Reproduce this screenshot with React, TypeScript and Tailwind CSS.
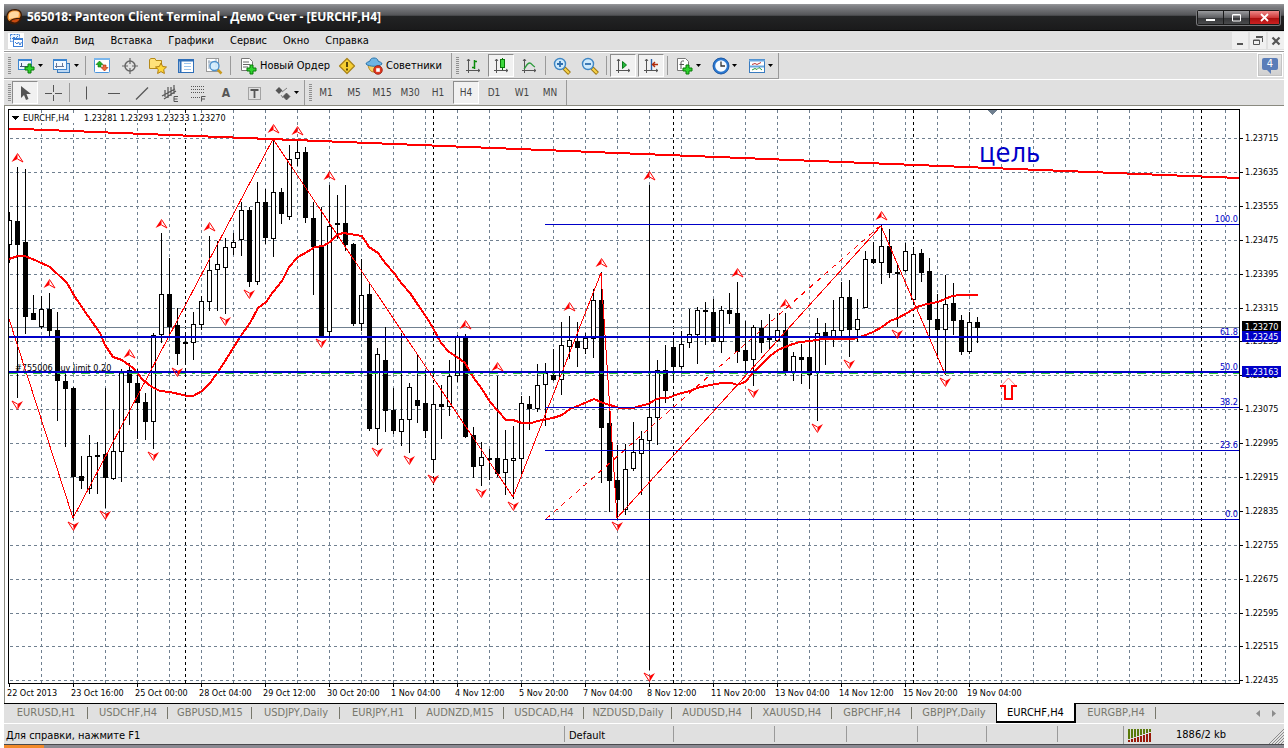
import React from "react";

type Candle = [x: number, high: number, low: number, top: number, bottom: number, filled: 0 | 1];

const CANDLES: Candle[] = [
  [9, 212, 263, 220, 245, 0], [17, 167, 398, 221, 245, 1], [25, 169, 334, 242, 317, 1], [33, 295, 319, 313, 320, 1],
  [41, 296, 329, 309, 327, 0], [49, 293, 338, 309, 331, 1], [57, 312, 421, 330, 381, 1], [65, 373, 447, 381, 389, 1],
  [73, 387, 519, 388, 477, 1], [81, 456, 489, 476, 481, 1], [89, 435, 494, 456, 489, 0], [97, 442, 494, 455, 457, 1],
  [105, 388, 508, 454, 478, 1], [113, 410, 480, 451, 479, 0], [121, 369, 482, 371, 452, 0], [129, 363, 425, 370, 383, 1],
  [137, 369, 439, 383, 403, 1], [145, 393, 440, 402, 422, 1], [153, 333, 449, 335, 422, 0], [161, 233, 343, 294, 335, 0],
  [169, 258, 338, 294, 327, 1], [177, 308, 365, 325, 354, 1], [185, 335, 363, 342, 344, 1], [193, 312, 360, 324, 343, 0],
  [201, 296, 330, 301, 325, 0], [209, 236, 311, 270, 302, 0], [217, 241, 311, 264, 270, 0], [225, 238, 314, 247, 268, 0],
  [233, 233, 255, 242, 248, 0], [241, 202, 256, 210, 240, 0], [249, 207, 287, 210, 282, 1], [257, 182, 285, 202, 282, 0],
  [265, 189, 244, 202, 238, 1], [273, 139, 257, 192, 239, 0], [281, 188, 224, 192, 214, 1], [289, 145, 220, 159, 217, 0],
  [297, 139, 166, 152, 159, 0], [305, 147, 223, 152, 218, 1], [313, 202, 295, 218, 247, 1], [321, 207, 336, 246, 336, 1],
  [329, 185, 336, 226, 332, 0], [337, 195, 239, 223, 225, 1], [345, 185, 251, 223, 245, 1], [353, 243, 326, 244, 324, 1],
  [361, 259, 331, 295, 324, 0], [369, 282, 431, 294, 429, 1], [377, 348, 445, 354, 429, 0], [385, 327, 432, 360, 411, 1],
  [393, 388, 434, 410, 431, 1], [401, 333, 446, 419, 432, 0], [409, 383, 453, 387, 420, 0], [417, 354, 423, 400, 406, 1],
  [425, 370, 438, 403, 431, 1], [433, 385, 472, 404, 460, 0], [441, 385, 439, 404, 407, 1], [449, 360, 416, 376, 407, 0],
  [457, 335, 382, 337, 376, 0], [465, 334, 438, 337, 437, 1], [473, 427, 478, 435, 467, 1], [481, 442, 486, 457, 466, 0],
  [489, 449, 480, 458, 460, 1], [497, 376, 477, 458, 474, 1], [505, 430, 495, 459, 473, 0], [513, 426, 499, 458, 461, 0],
  [521, 396, 476, 403, 459, 0], [529, 396, 430, 404, 409, 1], [537, 364, 412, 385, 409, 0], [545, 363, 426, 373, 385, 0],
  [553, 349, 381, 375, 380, 1], [561, 322, 395, 345, 380, 0], [569, 316, 359, 340, 347, 0], [577, 322, 367, 341, 348, 1],
  [585, 333, 354, 338, 349, 0], [593, 289, 358, 300, 339, 0], [601, 272, 483, 300, 428, 1], [609, 399, 512, 423, 481, 1],
  [617, 445, 519, 480, 500, 1], [625, 444, 515, 469, 510, 0], [633, 422, 471, 452, 469, 0], [641, 431, 495, 439, 454, 0],
  [649, 185, 670, 417, 441, 0], [657, 360, 445, 370, 418, 0], [665, 345, 403, 370, 391, 1], [673, 340, 383, 347, 367, 1],
  [681, 331, 369, 344, 367, 0], [689, 309, 348, 334, 343, 0], [697, 307, 364, 310, 335, 0], [705, 302, 345, 310, 312, 1],
  [713, 299, 342, 312, 342, 1], [721, 306, 353, 310, 342, 0], [729, 293, 324, 310, 314, 1], [737, 282, 363, 313, 352, 1],
  [745, 321, 373, 350, 361, 1], [753, 325, 386, 327, 360, 0], [761, 320, 353, 328, 343, 1], [769, 314, 350, 337, 340, 1],
  [777, 313, 342, 330, 341, 0], [785, 313, 375, 330, 372, 1], [793, 352, 381, 356, 372, 0], [801, 344, 384, 357, 360, 1],
  [809, 337, 389, 357, 375, 1], [817, 318, 421, 333, 373, 0], [825, 323, 365, 332, 340, 1], [833, 300, 347, 330, 340, 0],
  [841, 282, 339, 297, 331, 0], [849, 280, 357, 297, 330, 1], [857, 299, 342, 319, 330, 0], [865, 251, 308, 259, 308, 0],
  [873, 242, 264, 259, 263, 1], [881, 225, 284, 246, 263, 0], [889, 229, 278, 246, 273, 1], [897, 265, 327, 272, 274, 1],
  [905, 243, 272, 251, 271, 0], [913, 247, 303, 254, 300, 0], [921, 249, 282, 253, 273, 1], [929, 258, 336, 271, 320, 1],
  [937, 294, 359, 319, 330, 1], [945, 275, 375, 304, 330, 0], [953, 283, 335, 303, 321, 1], [961, 315, 355, 320, 352, 1],
  [969, 312, 354, 322, 352, 0], [977, 317, 343, 322, 328, 1],
];

const FRACTALS_UP = [
  [17, 153], [49, 279], [129, 349], [161, 219], [209, 222], [273, 124], [297, 126], [329, 171],
  [465, 320], [497, 362], [569, 302], [601, 258], [649, 171], [737, 268], [785, 299], [881, 211],
];
const FRACTALS_DOWN = [
  [17, 401], [225, 317], [249, 290], [321, 339], [177, 368], [153, 452], [105, 511], [73, 522], [377, 448], [409, 456],
  [433, 475], [481, 489], [513, 502], [617, 522], [649, 673], [753, 389], [817, 424], [849, 360], [897, 330], [945, 378],
];

const AVERAGE =
  "9,259 18,256 25,256 37,261 50,267 67,283 75,297 88,316 100,333 105,345 113,357 122,360 133,368 143,380 152,387 160,391 170,392 187,396 193,396 202,391 210,383 218,372 227,358 240,337 250,323 258,308 266,302 273,292 282,281 289,267 298,257 307,252 315,247 323,246 330,242 337,235 343,233 350,234 362,236 369,247 378,253 386,264 394,273 402,284 410,293 418,305 427,318 433,328 441,343 449,352 457,357 465,363 473,377 482,389 490,402 498,411 506,420 513,420 522,423 532,423 537,421 553,418 562,415 570,409 580,405 594,399 603,403 620,408 633,408 648,404 655,400 660,398 668,398 678,394 690,391 697,388 710,385 722,383 732,383 737,385 745,382 753,373 762,364 770,356 778,350 790,345 800,342 810,341 822,339 853,339 863,336 873,332 882,327 890,321 898,318 907,313 917,307 927,304 938,302 952,296 960,295 978,295";

const PRICES: [string, number][] = [
  ["1.23715", 138], ["1.23635", 172], ["1.23555", 206], ["1.23475", 240], ["1.23395", 274], ["1.23315", 308],
  ["1.23235", 341], ["1.23155", 375], ["1.23075", 409], ["1.22995", 443], ["1.22915", 477], ["1.22835", 511],
  ["1.22755", 545], ["1.22675", 579], ["1.22595", 613], ["1.22515", 646], ["1.22435", 680],
];
const PRICE_TAGS: [string, number, string][] = [
  ["1.23270", 321, "#000"], ["1.23245", 331, "#0000c8"], ["1.23163", 366, "#0000c8"],
];
const TIMES = [
  "22 Oct 2013", "23 Oct 16:00", "25 Oct 00:00", "28 Oct 04:00", "29 Oct 12:00", "30 Oct 20:00", "1 Nov 04:00",
  "4 Nov 12:00", "5 Nov 20:00", "7 Nov 04:00", "8 Nov 12:00", "11 Nov 20:00", "13 Nov 04:00", "14 Nov 12:00",
  "15 Nov 20:00", "19 Nov 04:00",
];
const FIBS: [string, number][] = [
  ["100.0", 224], ["61.8", 337], ["50.0", 372], ["38.2", 407], ["23.6", 450], ["0.0", 519],
];
const WEEK_LINES = [185, 433, 673, 913, 1201];

function Chart() {
  return (
    <svg
      role="img"
      aria-label="EURCHF H4 candlestick chart"
      viewBox="5 106 1279 597"
      preserveAspectRatio="xMinYMin meet"
      className="block h-full w-full font-['DejaVu_Sans_Condensed','DejaVu_Sans',sans-serif] text-[9px]"
      shapeRendering="crispEdges"
    >
      <clipPath id="plot"><rect x="9" y="110" width="1230" height="573" /></clipPath>
      <g clipPath="url(#plot)">
        <g stroke="#708090" strokeDasharray="3 3">
          {Array.from({ length: 38 }, (_, i) => (
            <line key={i} x1={41.5 + i * 32} x2={41.5 + i * 32} y1="110" y2="683" />
          ))}
          {PRICES.map(([p, y]) => <line key={p} x1="10" x2="1239" y1={y + 0.5} y2={y + 0.5} />)}
        </g>
        <g stroke="#000" strokeDasharray="3 3">
          {WEEK_LINES.map((x) => <line key={x} x1={x + 0.5} x2={x + 0.5} y1="110" y2="683" />)}
        </g>
        <line x1="9" x2="1239" y1="327.5" y2="327.5" stroke="#708090" />
        <text x="15" y="371">#755006 buy limit 0.20</text>
        {CANDLES.map(([x, high, low, top, bottom, filled]) => (
          <g key={x}>
            <rect x={x} y={high} width="1" height={low - high} fill="#000" />
            <rect x={x - 2} y={top} width="5" height={bottom - top} fill="#000" />
            {!filled && <rect x={x - 1} y={top + 1} width="3" height={bottom - top - 2} fill="#fff" />}
          </g>
        ))}
        <polyline points={AVERAGE} fill="none" stroke="#f00" strokeWidth="2" />
        <line x1="9" y1="128.5" x2="1239" y2="178" stroke="#f00" strokeWidth="2" />
        <polyline
          points="9,319 73,518 273,139 513,497 601,273 617,518 881,226 945,374"
          fill="none" stroke="#f00"
        />
        <line x1="546" y1="519" x2="881" y2="225" stroke="#f00" strokeDasharray="5 5" />
        <line x1="9" x2="1239" y1="373.5" y2="373.5" stroke="#32cd32" strokeDasharray="9 6 3 6" />
        <g stroke="#0000c8">
          {[224, 407, 450, 519].map((y) => <line key={y} x1="545" x2="1239" y1={y + 0.5} y2={y + 0.5} />)}
          <line x1="9" x2="1239" y1="337" y2="337" strokeWidth="2" />
          <line x1="9" x2="1239" y1="372" y2="372" strokeWidth="2" />
        </g>
        <g fill="#0000c8" textAnchor="end">
          {FIBS.map(([label, y]) => <text key={label} x="1238" y={y - 2}>{label}</text>)}
        </g>
        <g fill="#f00" stroke="#f00" strokeWidth="1" shapeRendering="auto">
          {FRACTALS_UP.map(([x, y]) => (
            <g key={`${x}-${y}`}>
              <path d={`M${x + 0.5} ${y}L${x - 5.5} ${y + 9}L${x + 0.5} ${y + 6}Z`} strokeWidth="0" />
              <path d={`M${x + 0.5} ${y + 0.5}L${x + 6} ${y + 9}L${x + 0.5} ${y + 6}`} fill="none" />
            </g>
          ))}
          {FRACTALS_DOWN.map(([x, y]) => (
            <g key={`${x}-${y}`}>
              <path d={`M${x + 0.5} ${y + 9}L${x + 6} ${y}L${x + 0.5} ${y + 3}Z`} strokeWidth="0" />
              <path d={`M${x + 0.5} ${y + 8.5}L${x - 5} ${y}L${x + 0.5} ${y + 3}`} fill="none" />
            </g>
          ))}
        </g>
        <path d="M987 110h10l-5 5z" fill="#708090" />
        <path d="M1001 386l7.5-8 7.5 8" fill="none" stroke="#f88" shapeRendering="auto" />
        <path d="M1000 386h5v13h7v-13h5" fill="none" stroke="#f00" strokeWidth="2" />
        <text x="979" y="162" fill="#0000c8" className="text-[27px]">цель</text>
      </g>
      <path d="M8.500 683.500V109.500H1239.500V683.500Z" fill="none" stroke="#000" />
      <path d="M12 116h7l-3.500 4z" fill="#000" />
      <rect x="21" y="113" width="206" height="10" fill="#fff" />
      <text x="23" y="121">EURCHF,H4</text>
      <text x="84" y="121">1.23281 1.23293 1.23233 1.23270</text>
      {PRICES.map(([p, y]) => (
        <g key={p}>
          <rect x="1240" y={y} width="3" height="1" />
          <text x="1245" y={y + 3}>{p}</text>
        </g>
      ))}
      {PRICE_TAGS.map(([p, y, color]) => (
        <g key={p}>
          <rect x="1242" y={y} width="39" height="11" fill={color} />
          <text x="1245" y={y + 9} fill="#fff">{p}</text>
        </g>
      ))}
      {TIMES.map((t, i) => (
        <g key={t}>
          <rect x={9 + i * 64} y="684" width="1" height="3" />
          <text x={7 + i * 64} y="696">{t}</text>
        </g>
      ))}
    </svg>
  );
}

function Icon({ children, w = 18 }: { children: React.ReactNode; w?: number }) {
  return <svg width={w} height="18" viewBox={`0 0 ${w} 18`} aria-hidden="true" className="shrink-0">{children}</svg>;
}
function Caret() {
  return <svg width="5" height="3" viewBox="0 0 5 3" aria-hidden="true" className="shrink-0"><path d="M0 0h5L2.500 3z" /></svg>;
}
const Grip = () => <span className="my-1 ml-1 w-[3px] shrink-0 bg-[repeating-linear-gradient(#8f8f8f_0_1px,#e0e0e0_1px_2px)]" />;
const Sep = () => <span className="mx-0.5 my-0.5 w-px shrink-0 bg-[#9a9a9a]" />;

const PRESSED =
  "border border-t-[#8c8c8c] border-l-[#8c8c8c] border-r-white border-b-white bg-[#f1f1f1]";

function Tool({ label, pressed, wide, children }: { label: string; pressed?: boolean; wide?: boolean; children: React.ReactNode }) {
  return (
    <button
      type="button"
      aria-label={label}
      className={`flex shrink-0 items-center justify-center gap-0.5 ${wide ? "w-9" : "mx-px w-[26px]"} ${pressed ? PRESSED : ""}`}
    >
      {children}
    </button>
  );
}

const Axes = () => <path d="M4.500 2v14M2 13.500h14M3 4l1.500-2L6 4M14 12l2 1.500-2 1.500" fill="none" stroke="#555" />;
const Plus = ({ x, y }: { x: number; y: number }) => (
  <path d={`M${x + 3} ${y}h3v3h3v3h-3v3h-3v-3h-3v-3h3z`} fill="#2fd32f" stroke="#087a08" />
);

function Magnifier({ minus }: { minus?: boolean }) {
  return (
    <Icon>
      <path d="M11 11l5.500 5.500" stroke="#9a7410" strokeWidth="4" />
      <path d="M11.500 11.500l4.500 4.500" stroke="#f6d24a" strokeWidth="2.200" />
      <circle cx="7" cy="7" r="5.500" fill="#cfeafb" stroke="#3f86c4" strokeWidth="1.400" />
      <path d={minus ? "M4 7h6" : "M4 7h6M7 4v6"} stroke="#2f6fae" strokeWidth="1.800" />
    </Icon>
  );
}

const TABS: [string, string][] = [
  ["EURUSD,H1", "w-21"], ["USDCHF,H4", "w-20"], ["GBPUSD,M15", "w-21"], ["USDJPY,Daily", "w-22"], ["EURJPY,H1", "w-19"],
  ["AUDNZD,M15", "w-22"], ["USDCAD,H4", "w-20"], ["NZDUSD,Daily", "w-22"], ["AUDUSD,H4", "w-20"], ["XAUUSD,H4", "w-20"],
  ["GBPCHF,H4", "w-20"], ["GBPJPY,Daily", "w-21"], ["EURCHF,H4", "w-20"], ["EURGBP,H4", "w-20"],
];
const PERIODS = ["M1", "M5", "M15", "M30", "H1", "H4", "D1", "W1", "MN"];
const MENU = ["Файл", "Вид", "Вставка", "Графики", "Сервис", "Окно", "Справка"];
const STATUS_CELLS = ["w-[101px]", "w-[72px]", "w-[71px]", "w-[69px]", "w-[71px]", "w-[66px]"];

export default function App() {
  return (
    <div className="flex h-screen flex-col overflow-hidden bg-white px-1 pt-1 font-['DejaVu_Sans_Condensed','DejaVu_Sans',sans-serif] text-[11px] text-black">
      <header className="flex h-[27px] shrink-0 items-center border-b border-black bg-[linear-gradient(#98999c_0%,#818286_8%,#525356_44%,#232425_45%,#1a1a1b_100%)] pr-1 pl-0.5">
        <Icon>
          <path d="M.5 8C.5 4 4 1 8.500 1S16 3 16 7.500 13 16.500 8.500 16.500.5 13 .5 8z" fill="#3c1c08" />
          <path d="M1.500 9C2 4 5 2 9 2.500c4 0 6 2 5.500 5.500l-1 2c-4 0-8 .5-10 3-1.500-1-2-2.500-2-4z" fill="#f59a3c" />
          <path d="M3 6c2-3 7-3.500 10-1.500L12.500 9 3 11z" fill="#ffd7a0" />
          <path d="M5 13c3-2 6-2 8.500-2-1 3-4 4-7 3z" fill="#c84a10" />
        </Icon>
        <h1 className="ml-[3px] font-['Open_Sans',sans-serif] text-[12px] leading-4 font-bold whitespace-nowrap text-white">
          565018: Panteon Client Terminal - Демо Счет - [EURCHF,H4]
        </h1>
        <div className="ml-auto flex h-[15px] gap-px rounded-xs bg-[#1a1a1a] p-px ring-1 ring-[#77787b]">
          <button type="button" aria-label="Свернуть" className="flex w-[25px] items-center justify-center bg-[linear-gradient(#9a9b9e,#5d5e61_50%,#343537_51%,#4a4b4d)]">
            <svg width="9" height="9" viewBox="0 0 9 9"><path d="M0 6h9v2H0z" fill="#fff" /></svg>
          </button>
          <button type="button" aria-label="Развернуть" className="flex w-[25px] items-center justify-center bg-[linear-gradient(#9a9b9e,#5d5e61_50%,#343537_51%,#4a4b4d)]">
            <svg width="9" height="9" viewBox="0 0 9 9"><path d="M.5 2h8v6h-8zM.5 1.500h8" fill="none" stroke="#fff" /></svg>
          </button>
          <button type="button" aria-label="Закрыть" className="flex w-[29px] items-center justify-center bg-[linear-gradient(#e88,#cf3a3a_50%,#a80d0d_51%,#c22)]">
            <svg width="9" height="9" viewBox="0 0 9 9"><path d="M1 1l7 7M8 1L1 8" stroke="#fff" strokeWidth="1.800" /></svg>
          </button>
        </div>
      </header>

      <nav className="flex h-[19px] shrink-0 items-center bg-[#e0e0e0] pl-1" aria-label="Меню">
        <span className="flex h-4 w-4 items-center justify-center bg-white">
          <svg width="15" height="15" viewBox="0 0 15 15" aria-hidden="true">
            <rect x="1.500" y="1.500" width="9" height="7" fill="#eaf3ff" stroke="#3d7fd6" strokeDasharray="2 1" />
            <path d="M3 6l2-2 1.500 1.500L9 3" fill="none" stroke="#3d7fd6" />
            <rect x="4.500" y="5.500" width="9" height="8" fill="#fff" stroke="#3d7fd6" />
            <path d="M4 6.500h10" stroke="#3d7fd6" />
            <path d="M6 9l2 2 1.500-2 1.500 3 1.500-3" fill="none" stroke="#3d7fd6" />
          </svg>
        </span>
        <div className="ml-[7px] flex gap-4">
          {MENU.map((m) => <button key={m} type="button" className="leading-4">{m}</button>)}
        </div>
        <div className="ml-auto flex h-full items-center gap-0.5">
          <button type="button" aria-label="Свернуть окно" className="flex h-[17px] w-4 items-center justify-center bg-[#f0f0f0]">
            <svg width="10" height="10" viewBox="0 0 10 10"><path d="M2 7h6v2H2z" fill="#555" /></svg>
          </button>
          <button type="button" aria-label="Восстановить окно" className="flex h-[17px] w-4 items-center justify-center bg-[#f0f0f0]">
            <svg width="10" height="10" viewBox="0 0 10 10" fill="none" stroke="#555"><path d="M.5 4v4.500h6V4zM0 4.500h7M3 1.500h6.500V6M3 .5h7" /></svg>
          </button>
          <button type="button" aria-label="Закрыть окно" className="flex h-[17px] w-4 items-center justify-center bg-[#f0f0f0]">
            <svg width="10" height="10" viewBox="0 0 10 10"><path d="M1.500 1.500l7 7M8.500 1.500l-7 7" stroke="#555" strokeWidth="2.200" /></svg>
          </button>
        </div>
      </nav>
      <div className="h-[3px] shrink-0 border-y border-white bg-[#9a9a9a]" />

      <div className="flex h-[26px] shrink-0 bg-[#e0e0e0]">
        <div className="flex border-r border-b border-[#9a9a9a]">
          <Grip />
          <div className="flex py-px">
            <Tool label="Новый график" wide>
              <Icon w={20}>
                <rect x="2.500" y="2.500" width="13" height="10" fill="#eef6ff" stroke="#3d86d0" />
                <path d="M2 3h14" stroke="#3d86d0" strokeWidth="2" />
                <path d="M5.500 6v4M4 9.500h8" stroke="#457" />
                <Plus x={9} y={7} />
              </Icon>
              <Caret />
            </Tool>
            <Tool label="Профили" wide>
              <Icon w={20}>
                <rect x="5.500" y="6.500" width="12" height="9" fill="#bcd8f4" stroke="#3d7ab8" />
                <rect x="1.500" y="2.500" width="13" height="10" fill="#f4faff" stroke="#3d86d0" />
                <path d="M1 3h14" stroke="#3d86d0" strokeWidth="2" />
                <path d="M4.500 6v5M3 9.500h9M10.500 6v4" stroke="#679" />
              </Icon>
              <Caret />
            </Tool>
            <Sep />
            <Tool label="Обзор рынка">
              <Icon>
                <rect x="1.500" y="1.500" width="15" height="14" rx="1" fill="#fff" stroke="#4a94dc" />
                <path d="M1 2h16" stroke="#7ab6ec" strokeWidth="2" />
                <path d="M6.500 4l3.500 3.500H8V10H5V7.500H3z" fill="#21b121" stroke="#0a6f0a" strokeWidth=".6" />
                <path d="M11.500 14L15 10.500h-2V8h-3v2.500H8z" fill="#f06a3a" stroke="#a32a08" strokeWidth=".6" />
              </Icon>
            </Tool>
            <Tool label="Окно данных">
              <Icon><circle cx="9" cy="9" r="5" fill="none" stroke="#666" strokeWidth="1.500" /><path d="M9 1v6M9 11v6M1 9h6M11 9h6" stroke="#666" strokeWidth="1.200" /></Icon>
            </Tool>
            <Tool label="Навигатор">
              <Icon>
                <path d="M.5 2.500V11.500H12.500V3.500H7L6 1.500H2z" fill="#ffe27a" stroke="#b58a1a" />
                <path d="M12 6l1.700 3.500 3.800.5-2.800 2.600.7 3.900-3.400-1.900-3.400 1.900.7-3.900L6.500 10l3.800-.5z" fill="#ffd83a" stroke="#b07d10" />
              </Icon>
            </Tool>
            <Tool label="Терминал">
              <Icon><rect x="1.500" y="2.500" width="15" height="13" fill="#fff" stroke="#2f6fb8" /><path d="M2 3.500h14M3.500 3v12" stroke="#2f6fb8" strokeWidth="2" /><path d="M7 6.500h7M7 9.500h7M7 12.500h7" stroke="#9cc4ec" /></Icon>
            </Tool>
            <Tool label="Тестер стратегий">
              <Icon>
                <rect x="1.500" y="1.500" width="12" height="13" fill="#fff" stroke="#999" />
                <path d="M4 3v9M11 2v8M3 5h8" stroke="#9ab" />
                <path d="M12.500 12.500l4 4" stroke="#c89a20" strokeWidth="2.500" />
                <circle cx="9.500" cy="9" r="4.500" fill="#cfeafb" fillOpacity=".85" stroke="#4b90cc" strokeWidth="1.300" />
              </Icon>
            </Tool>
            <Sep />
            <button type="button" className="ml-[7px] flex w-[93px] shrink-0 items-center gap-0.5 pt-px whitespace-nowrap">
              <Icon>
                <path d="M1.500 1.500h8l3 3v9h-11z" fill="#fff" stroke="#777" />
                <path d="M3 5h6M3 7.500h7M3 10h5" stroke="#666" />
                <Plus x={7} y={8} />
              </Icon>
              Новый Ордер
            </button>
            <Tool label="Метаредактор">
              <Icon><path d="M9 1.500L16.500 9 9 16.500 1.500 9z" fill="#f7cf32" stroke="#a8831a" strokeWidth="1.200" strokeLinejoin="round" /><path d="M9 5v5M9 11.500v2" stroke="#4a3a05" strokeWidth="1.800" /></Icon>
            </Tool>
            <button type="button" className="ml-1 flex w-[86px] shrink-0 items-center gap-[3px] pt-px whitespace-nowrap">
              <Icon>
                <path d="M3 8c1 5 3 7 6 7s5-3 5.500-7z" fill="#f5cf62" stroke="#b98a1e" />
                <path d="M1 7c0-2 3-2 4-3 0-2 2-3 4-3s4 1 4 3c1 1 4 1 4 3-3 3-13 3-16 0z" fill="#6db4e4" stroke="#2c74aa" />
                <circle cx="13" cy="13" r="4.300" fill="#e03a22" stroke="#98180a" strokeWidth=".8" />
                <rect x="11.200" y="11.200" width="3.600" height="3.600" fill="#fff" />
              </Icon>
              Советники
            </button>
          </div>
        </div>
        <div className="flex border-r border-b border-[#9a9a9a]">
          <Grip />
          <div className="flex py-px">
            <Tool label="Бары"><Icon><Axes /><path d="M10.500 3v9M8 10.500h2M11 4.500h2" stroke="#0a8a0a" strokeWidth="1.500" /></Icon></Tool>
            <Tool label="Свечи" pressed><Icon><Axes /><path d="M10.500 1v12" stroke="#0a6a0a" /><rect x="8.500" y="2.500" width="4" height="8" fill="#3fd83f" stroke="#0a7a0a" /></Icon></Tool>
            <Tool label="Линия"><Icon><Axes /><path d="M4 12c2-2 3-6 5.500-6S12 9 15 10" fill="none" stroke="#2a9a3a" strokeWidth="1.300" /></Icon></Tool>
            <Sep />
            <Tool label="Увеличить"><Magnifier /></Tool>
            <Tool label="Уменьшить"><Magnifier minus /></Tool>
            <Sep />
            <Tool label="Автопрокрутка" pressed><Icon><Axes /><path d="M8.500 4.500v7l4-3.500z" fill="#22b83a" stroke="#0a7a1a" /></Icon></Tool>
            <Tool label="Сдвиг графика" pressed><Icon><Axes /><path d="M9.500 2v11" stroke="#2a5fa8" strokeWidth="1.400" /><path d="M16 7.500h-5M13 5l-2.500 2.500L13 10" fill="none" stroke="#b02a0a" strokeWidth="1.400" /></Icon></Tool>
            <Sep />
            <Tool label="Индикаторы" wide>
              <Icon>
                <path d="M1.500 1.500h8l3 3v9h-11z" fill="#fff" stroke="#777" />
                <path d="M8 4H6.500c-1 0-1.500.5-1.500 2v6M3.500 7.500H8" fill="none" stroke="#555" />
                <Plus x={7} y={8} />
              </Icon>
              <Caret />
            </Tool>
            <Tool label="Периоды" wide>
              <Icon><circle cx="9" cy="9" r="7" fill="#f6fbff" stroke="#2a78d0" strokeWidth="2.400" /><circle cx="9" cy="9" r="8" fill="none" stroke="#174a90" strokeWidth=".7" /><path d="M9 4.500V9h4" fill="none" stroke="#333" strokeWidth="1.300" /></Icon>
              <Caret />
            </Tool>
            <Tool label="Шаблоны" wide>
              <Icon><rect x="1.500" y="2.500" width="15" height="13" fill="#fff" stroke="#3a7cc0" /><path d="M1 3.500h16M2 9.500h14" stroke="#6aa8e0" strokeWidth="2" /><path d="M4 7.500l3-1 2 1 4-2" fill="none" stroke="#b33" /><path d="M4 13l3-1.500 2 1 2-2 3 2.500" fill="none" stroke="#2a9a3a" /></Icon>
              <Caret />
            </Tool>
          </div>
        </div>
        <button type="button" aria-label="Сообщения: 4" className="mr-px ml-auto flex h-6 w-[26px] flex-col items-center border border-white bg-[linear-gradient(#e9e9e9,#cfcfcf)] pt-1 ring-1 ring-[#c4c4c4] ring-inset">
          <span className="flex h-3 w-4 items-center justify-center rounded-xs bg-[#5a7db8] text-[11px] leading-3 text-white">4</span>
          <svg width="6" height="4" viewBox="0 0 6 4" aria-hidden="true"><path d="M0 0h4v4z" fill="#5a7db8" /></svg>
        </button>
      </div>

      <div className="flex h-[26px] shrink-0 border-t border-white bg-[#e0e0e0]">
        <div className="flex border-r border-[#9a9a9a]">
          <Grip />
          <div className="flex py-px">
            <Tool label="Курсор" pressed><Icon><path d="M5 2v12l3-3 2 5 2.500-1-2-5H15z" fill="#555" /></Icon></Tool>
            <Tool label="Перекрестие"><Icon><path d="M9.500 1v7M9.500 11v6M1 9.500h7M11 9.500h7" stroke="#555" /></Icon></Tool>
            <Sep />
            <Tool label="Вертикальная линия"><Icon><path d="M9.500 2.500v13" stroke="#555" /></Icon></Tool>
            <Tool label="Горизонтальная линия"><Icon><path d="M3 9.500h12" stroke="#555" /></Icon></Tool>
            <Tool label="Трендовая линия"><Icon><path d="M3 15.500L15 3.500" stroke="#555" strokeWidth="1.200" /></Icon></Tool>
            <Tool label="Канал">
              <Icon><path d="M1 12L14 5M3 15l12-8M4 6v7M7 3v11M10 3v9M13 1v9" fill="none" stroke="#555" strokeWidth="1.200" /><path d="M17 12.500h-4v5h4M13 15h3.500" fill="none" stroke="#555" /></Icon>
            </Tool>
            <Tool label="Фибоначчи">
              <Icon><path d="M2 2.500h14M2 5.500h14M2 8.500h14M2 13.500h9" stroke="#555" strokeDasharray="1 1" /><path d="M16.500 12.500h-4v5M12.500 15h3.500" fill="none" stroke="#555" /></Icon>
            </Tool>
            <Tool label="Текст"><span className="text-[12px] font-bold text-[#555]">A</span></Tool>
            <Tool label="Метка">
              <Icon><rect x="3.500" y="3.500" width="12" height="12" fill="none" stroke="#666" strokeDasharray="1 1" /><path d="M5.500 6h8M9.500 6v8" stroke="#555" strokeWidth="1.800" /></Icon>
            </Tool>
            <Tool label="Стрелки" wide>
              <Icon><path d="M5 3l3.500 3.500L5 10 1.500 6.500z" fill="#555" /><path d="M12.500 9l3.500 3.500-3.500 3.500L9 12.500zM7 11l2 3M8 8l5-4" fill="#555" stroke="#555" strokeWidth=".7" /></Icon>
              <Caret />
            </Tool>
          </div>
        </div>
        <div className="flex border-r border-[#9a9a9a]">
          <Grip />
          <div className="flex py-px pr-0.5 text-[10px] text-[#444]">
            {PERIODS.map((p) => <Tool key={p} label={p} pressed={p === "H4"}>{p}</Tool>)}
          </div>
        </div>
      </div>

      <main className="min-h-0 flex-1 border-t border-l border-t-[#8a8a80] border-l-[#8a8a80] bg-white">
        <Chart />
      </main>

      <div role="tablist" className="flex h-[21px] shrink-0 border-t border-b border-t-black border-b-white bg-[#e0e0e0] text-[#77776c]">
        {TABS.map(([t, w]) =>
          t === "EURCHF,H4" ? (
            <button key={t} type="button" role="tab" aria-selected="true" className={`-mt-px h-5 shrink-0 border border-t-0 border-r-2 border-b-2 border-black bg-white pt-0.5 text-black ${w}`}>{t}</button>
          ) : (
            <button key={t} type="button" role="tab" aria-selected="false" className={`relative shrink-0 ${w}`}>
              {t}
              {t !== "GBPJPY,Daily" && <span className="absolute top-[3px] right-0 h-3 w-px bg-[#77776c]" />}
            </button>
          ),
        )}
        <div className="ml-auto flex items-center gap-3 pr-2">
          <button type="button" aria-label="Назад"><svg width="4" height="7" viewBox="0 0 4 7"><path d="M4 0v7L0 3.500z" fill="#8c8c8c" /></svg></button>
          <button type="button" aria-label="Вперёд"><svg width="4" height="7" viewBox="0 0 4 7"><path d="M0 0v7l4-3.500z" fill="#8c8c8c" /></svg></button>
        </div>
      </div>

      <footer className="flex h-5 shrink-0 items-stretch bg-[#e0e0e0]">
        <p className="w-[560px] shrink pt-1 pl-0.5 leading-4 whitespace-nowrap">Для справки, нажмите F1</p>
        <p className="my-0.5 w-[109px] border-l border-[#9a9a9a] pt-0.5 pl-1 leading-4">Default</p>
        {STATUS_CELLS.map((w, i) => <span key={i} className={`my-0.5 border-l border-[#9a9a9a] ${w}`} />)}
        <div className="mt-0.5 flex flex-1 items-center border-l border-[#9a9a9a] pl-1">
          <svg width="24" height="13" viewBox="0 0 24 13" aria-hidden="true" shapeRendering="crispEdges">
            {Array.from({ length: 8 }, (_, i) => (
              <g key={i}>
                <rect x={i * 3} y="0" width="2" height={10 - i} fill="#5a7a0a" />
                <rect x={i * 3} y={11 - i} width="2" height={2 + i} fill="#9a1a0a" />
              </g>
            ))}
          </svg>
          <span className="ml-6 leading-4">1886/2 kb</span>
          <svg width="15" height="15" viewBox="0 0 15 15" aria-hidden="true" className="ml-auto self-end">
            <path d="M0 15L15 0M3 15L15 3M6 15L15 6M9 15l6-6M12 15l3-3" stroke="#8c8c8c" />
          </svg>
        </div>
      </footer>
      <div className="flex h-1 shrink-0 border-t border-[#4a4a4e] bg-[#8b8a92]">
        <span className="w-10 bg-[#f28a2a]" />
      </div>
    </div>
  );
}
